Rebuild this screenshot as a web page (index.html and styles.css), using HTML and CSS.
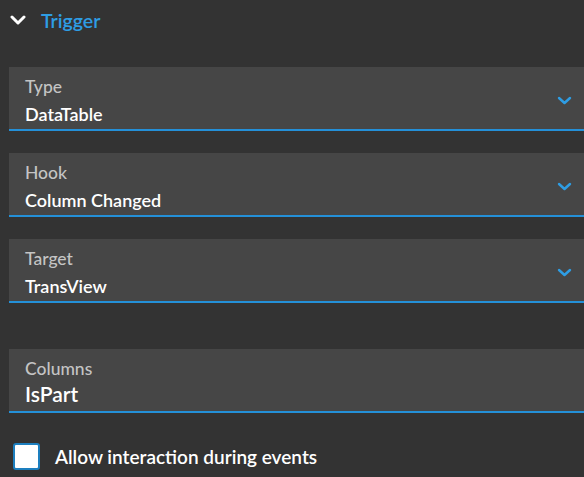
FILE: index.html
```html
<!DOCTYPE html>
<html>
<head>
<meta charset="utf-8">
<link rel="stylesheet" href="styles.css">
</head>
<body>
<div class="panel">
  <div class="section-header">
    <svg class="header-chevron" width="16" height="12" viewBox="0 0 16 12"><path d="M2 3 L8 9 L14 3" fill="none" stroke="#fff" stroke-width="3" stroke-linecap="round" stroke-linejoin="round"/></svg>
    <span class="section-title">Trigger</span>
  </div>
  <div class="fields">
    <div class="field select">
      <div class="field-text">
        <div class="field-label">Type</div>
        <div class="field-value">DataTable</div>
      </div>
      <svg class="dd-chevron" width="15" height="9" viewBox="0 0 15 9"><path d="M2 2 L7.5 7 L13 2" fill="none" stroke="#2e9de4" stroke-width="2.4" stroke-linecap="round" stroke-linejoin="round"/></svg>
    </div>
    <div class="field select">
      <div class="field-text">
        <div class="field-label">Hook</div>
        <div class="field-value">Column Changed</div>
      </div>
      <svg class="dd-chevron" width="15" height="9" viewBox="0 0 15 9"><path d="M2 2 L7.5 7 L13 2" fill="none" stroke="#2e9de4" stroke-width="2.4" stroke-linecap="round" stroke-linejoin="round"/></svg>
    </div>
    <div class="field select">
      <div class="field-text">
        <div class="field-label">Target</div>
        <div class="field-value">TransView</div>
      </div>
      <svg class="dd-chevron" width="15" height="9" viewBox="0 0 15 9"><path d="M2 2 L7.5 7 L13 2" fill="none" stroke="#2e9de4" stroke-width="2.4" stroke-linecap="round" stroke-linejoin="round"/></svg>
    </div>
    <div class="field input">
      <div class="field-text">
        <div class="field-label">Columns</div>
        <div class="field-value big">IsPart</div>
      </div>
    </div>
  </div>
  <label class="check-row">
    <span class="checkbox"></span>
    <span class="check-label">Allow interaction during events</span>
  </label>
</div>
</body>
</html>
```
FILE: styles.css
```css
html, body {
  margin: 0;
  padding: 0;
  background: #333333;
  overflow: hidden;
}
body {
  font-family: Lato, "Noto Sans", sans-serif;
  width: 584px;
  height: 477px;
}
.panel {
  padding-left: 9px;
}
.section-header {
  display: flex;
  align-items: center;
  height: 40px;
  padding-left: 1px;
}
.header-chevron {
  display: block;
  margin-right: 15px;
}
.section-title {
  color: #2e9de4;
  font-size: 19.5px;
  font-weight: 600;
}
.fields {
  margin-top: 27px;
  display: flex;
  flex-direction: column;
  gap: 22px;
}
.field {
  background: #464646;
  height: 62px;
  border-bottom: 2px solid #2490d8;
  display: flex;
  align-items: flex-start;
  padding-left: 16px;
  padding-right: 12px;
  box-sizing: content-box;
}
.field.input {
  margin-top: 24px;
}
.field-text {
  flex: 1;
  padding-top: 8px;
}
.field-label {
  color: #c4c4c4;
  font-size: 17.5px;
  line-height: 24px;
  font-weight: 500;
}
.field-value {
  color: #ffffff;
  font-size: 18px;
  line-height: 28px;
  margin-top: 1px;
  font-weight: 600;
}
.field-value.big {
  font-size: 21px;
  margin-top: -1px;
}
.dd-chevron {
  display: block;
  margin-top: 29px;
}
.check-row {
  display: flex;
  align-items: center;
  margin-top: 30px;
  padding-left: 4px;
}
.checkbox {
  width: 23px;
  height: 23px;
  background: #ffffff;
  border: 2px solid #1d7fbf;
  border-radius: 3px;
  margin-right: 15px;
}
.check-label {
  color: #ffffff;
  font-size: 19px;
  font-weight: 600;
}
```
